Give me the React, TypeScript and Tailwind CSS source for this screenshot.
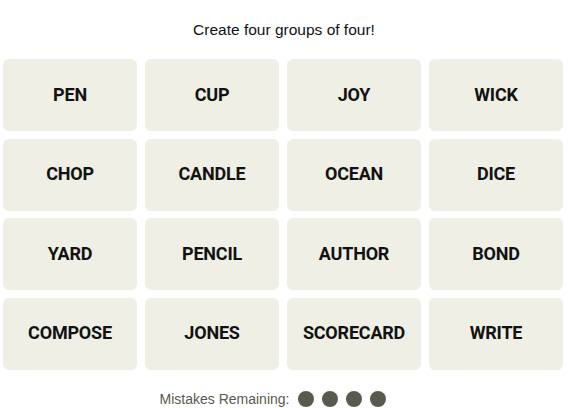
const words = [
  'PEN', 'CUP', 'JOY', 'WICK',
  'CHOP', 'CANDLE', 'OCEAN', 'DICE',
  'YARD', 'PENCIL', 'AUTHOR', 'BOND',
  'COMPOSE', 'JONES', 'SCORECARD', 'WRITE',
];

export default function App() {
  return (
    <main className="w-[568px] h-[408px] bg-white text-black font-['Liberation_Sans',Arial,sans-serif] overflow-hidden">
      <p className="pt-[20px] h-[59px] text-center text-[15.5px] leading-[20px] text-[#121212]">
        Create four groups of four!
      </p>

      <div className="ml-[3px] w-[560px] grid grid-cols-4 gap-x-2 gap-y-[7.5px]">
        {words.map((w) => (
          <button
            key={w}
            className="h-[72px] pb-[2px] rounded-md bg-[#efefe6] flex items-center justify-center font-['Roboto',sans-serif] font-bold text-[18px] tracking-[-0.2px] text-[#121212]"
          >
            {w}
          </button>
        ))}
      </div>

      <div className="mt-[21px] flex items-center justify-center gap-[9px] pr-[22px]">
        <span className="text-[14px] leading-[16px] text-[#5a594e]">Mistakes Remaining:</span>
        <div className="flex gap-2">
          {[0, 1, 2, 3].map((i) => (
            <span key={i} className="w-[16px] h-[16px] rounded-full bg-[#5a594e]" />
          ))}
        </div>
      </div>
    </main>
  );
}
